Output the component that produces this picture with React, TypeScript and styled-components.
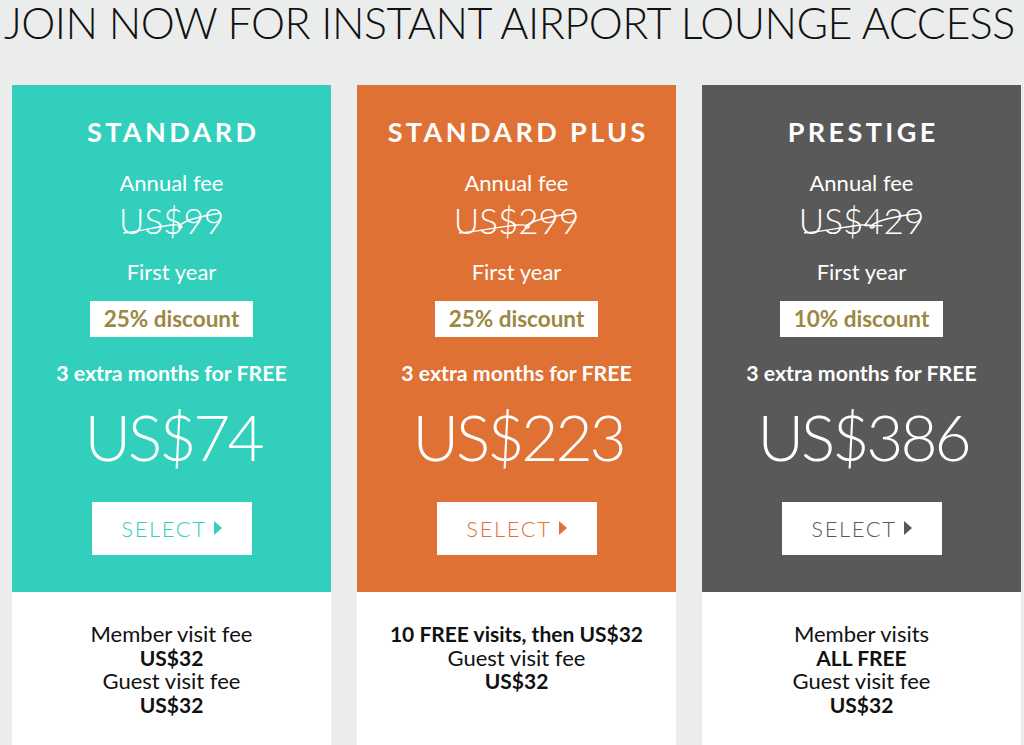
import React from "react";
import styled, { createGlobalStyle } from "styled-components";

const Global = createGlobalStyle`
  html, body { margin: 0; padding: 0; background: #ebecec; }
  body { font-family: Lato, "Open Sans", sans-serif; overflow: hidden; }
  * { box-sizing: border-box; }
`;

const Page = styled.div`
  width: 1024px;
  height: 745px;
  background: #ebecec;
  overflow: hidden;
`;

const Title = styled.h1`
  margin: 0;
  padding: 1px 0 0 4px;
  height: 85px;
  font-family: Lato, sans-serif;
  font-weight: 300;
  font-size: 43px;
  line-height: 44px;
  letter-spacing: -0.5px;
  color: #111;
  white-space: nowrap;
`;

const Cards = styled.div`
  display: grid;
  grid-template-columns: repeat(3, 319px);
  column-gap: 26px;
  padding-left: 12px;
`;

const Card = styled.div`
  display: flex;
  flex-direction: column;
  height: 680px;
`;

const Top = styled.div<{ $bg: string }>`
  height: 507px;
  background: ${(p) => p.$bg};
  display: flex;
  flex-direction: column;
  align-items: center;
  padding-top: 30px;
  color: #fff;
`;

const PlanName = styled.div`
  font-weight: 700;
  font-size: 27px;
  line-height: 34px;
  letter-spacing: 3.4px;
  margin-right: -3.4px;
`;

const Label = styled.div<{ $mt: number }>`
  margin-top: ${(p) => p.$mt}px;
  font-size: 22px;
  line-height: 28px;
  font-weight: 400;
`;

const OldPrice = styled.div`
  position: relative;
  margin-top: 3px;
  font-size: 35px;
  line-height: 40px;
  font-weight: 300;
`;

const Strike = styled.svg`
  position: absolute;
  left: 0;
  top: 0;
  width: 100%;
  height: 100%;
  overflow: visible;
`;

const Badge = styled.div`
  margin-top: 15px;
  height: 36px;
  padding: 0 14px;
  background: #fff;
  color: #9c8743;
  font-weight: 700;
  font-size: 22.5px;
  line-height: 36px;
  white-space: nowrap;
`;

const Extra = styled.div`
  margin-top: 22px;
  font-weight: 700;
  font-size: 21.3px;
  line-height: 28px;
`;

const BigPrice = styled.div`
  margin-top: 10px;
  font-size: 64px;
  line-height: 80px;
  font-weight: 300;
  letter-spacing: -3px;
  margin-right: -3px;
`;

const SelectButton = styled.button<{ $fg: string }>`
  margin-top: 25px;
  width: 160px;
  height: 53px;
  border: none;
  background: #fff;
  color: ${(p) => p.$fg};
  font-family: Lato, sans-serif;
  font-weight: 300;
  font-size: 22px;
  letter-spacing: 1.6px;
  display: flex;
  align-items: center;
  justify-content: center;
  gap: 7px;
  padding: 0;
  cursor: pointer;
`;

const Arrow = styled.span<{ $fg: string }>`
  width: 0;
  height: 0;
  border-top: 7px solid transparent;
  border-bottom: 7px solid transparent;
  border-left: 8px solid ${(p) => p.$fg};
  margin-top: -1px;
`;

const Bottom = styled.div`
  flex: 1;
  background: #fff;
  padding-top: 30px;
  text-align: center;
  color: #111;
  line-height: 23.5px;
`;

const Line = styled.div<{ $bold?: boolean }>`
  font-weight: ${(p) => (p.$bold ? 700 : 400)};
  font-size: ${(p) => (p.$bold ? "21px" : "22px")};
`;

type Plan = {
  name: string;
  bg: string;
  old: string;
  discount: string;
  price: string;
  lines: { t: string; b?: boolean }[];
};

const plans: Plan[] = [
  {
    name: "STANDARD",
    bg: "#32cfbd",
    old: "US$99",
    discount: "25% discount",
    price: "US$74",
    lines: [
      { t: "Member visit fee" },
      { t: "US$32", b: true },
      { t: "Guest visit fee" },
      { t: "US$32", b: true },
    ],
  },
  {
    name: "STANDARD PLUS",
    bg: "#e07135",
    old: "US$299",
    discount: "25% discount",
    price: "US$223",
    lines: [
      { t: "10 FREE visits, then US$32", b: true },
      { t: "Guest visit fee" },
      { t: "US$32", b: true },
    ],
  },
  {
    name: "PRESTIGE",
    bg: "#595959",
    old: "US$429",
    discount: "10% discount",
    price: "US$386",
    lines: [
      { t: "Member visits" },
      { t: "ALL FREE", b: true },
      { t: "Guest visit fee" },
      { t: "US$32", b: true },
    ],
  },
];

export default function App() {
  return (
    <Page>
      <Global />
      <Title>JOIN NOW FOR INSTANT AIRPORT LOUNGE ACCESS</Title>
      <Cards>
        {plans.map((p) => (
          <Card key={p.name}>
            <Top $bg={p.bg}>
              <PlanName>{p.name}</PlanName>
              <Label $mt={20}>Annual fee</Label>
              <OldPrice>
                {p.old}
                <Strike viewBox="0 0 100 40" preserveAspectRatio="none">
                  <path
                    d="M4 33 C 20 31, 35 27, 50 25 C 60 24, 62 28, 58 28 C 54 28, 60 22, 70 19 C 80 16, 90 14, 97 13"
                    fill="none"
                    stroke="#fff"
                    strokeWidth="1.3"
                    vectorEffect="non-scaling-stroke"
                  />
                </Strike>
              </OldPrice>
              <Label $mt={18}>First year</Label>
              <Badge>{p.discount}</Badge>
              <Extra>3 extra months for FREE</Extra>
              <BigPrice>{p.price}</BigPrice>
              <SelectButton $fg={p.bg}>
                SELECT
                <Arrow $fg={p.bg} />
              </SelectButton>
            </Top>
            <Bottom>
              {p.lines.map((l, i) => (
                <Line key={i} $bold={l.b}>
                  {l.t}
                </Line>
              ))}
            </Bottom>
          </Card>
        ))}
      </Cards>
    </Page>
  );
}
